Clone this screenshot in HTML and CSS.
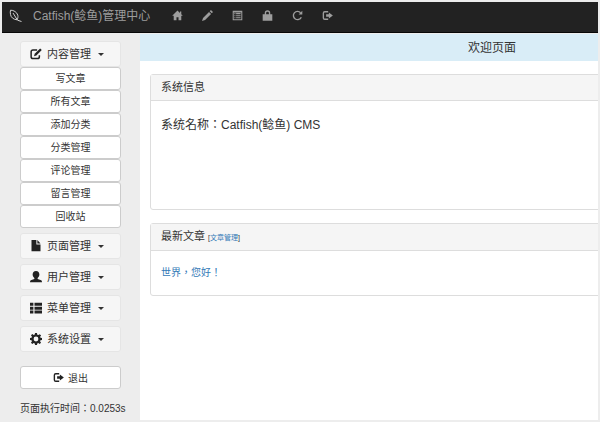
FILE: index.html
```html
<!DOCTYPE html>
<html lang="zh-CN">

<head>
  <meta charset="UTF-8">
  <meta name="viewport" content="width=device-width, initial-scale=1.0">
  <title>Catfish(鲶鱼)管理中心</title>
  <link rel="stylesheet" href="styles.css">
</head>

<body>

  <header class="navbar">
    <a class="brand" href="#">
      <svg class="logo" viewBox="0 0 14 14" aria-hidden="true">
        <path d="M1.500 1.200C4.500 1 8 3.200 8.800 6.200C9.200 8 8.800 9.800 8 10.800C4.500 10.500 2 8.500 1.500 5.500C1.200 4 1.200 2.500 1.500 1.200ZM4 4L8.500 11.200L12.500 12.500"/>
      </svg>
      <span>Catfish(鲶鱼)管理中心</span>
    </a>
    <nav class="tools">
      <a href="#" aria-label="首页"><svg viewBox="0 0 16 16"><path d="M8 .8L.3 8.500H2.500V15H6.500V10.500H9.500V15H13.500V8.500H15.700L13.500 6.300V2H11.500V4.300Z"/></svg></a>
      <a href="#" aria-label="写文章"><svg viewBox="0 0 16 16"><path d="M13 0L16 3L14.200 4.800L11.200 1.800ZM10.200 2.800L13.200 5.800L4.500 14.500L0 16L1.500 11.500Z"/></svg></a>
      <a href="#" aria-label="文章列表"><svg viewBox="0 0 16 16"><path fill-rule="evenodd" d="M1 1H15V15H1ZM2.500 3.500V13.500H13.500V3.500ZM3.500 4.500H5V6H3.500ZM6 4.500H12.500V6H6ZM3.500 7.500H5V9H3.500ZM6 7.500H12.500V9H6ZM3.500 10.500H5V12H3.500ZM6 10.500H12.500V12H6Z"/></svg></a>
      <a href="#" aria-label="修改密码"><svg viewBox="0 0 16 16"><path fill-rule="evenodd" d="M4 6V4.500A4 4 0 0 1 12 4.500V6H15V15.500H1V6ZM6 6H10V4.500A2 2 0 0 0 6 4.500Z"/></svg></a>
      <a href="#" aria-label="刷新"><svg viewBox="0 0 16 16"><path class="stroke" d="M12.500 4A6 6 0 1 0 13.500 10.500"/><path d="M15 1V6.500H9.500Z"/></svg></a>
      <a href="#" aria-label="退出"><svg viewBox="0 0 16 16"><path class="stroke" d="M9 2.500H4Q2 2.500 2 4.500V11.500Q2 13.500 4 13.500H9"/><path d="M10 3.500L15.800 8L10 12.500V9.800H6V6.200H10Z"/></svg></a>
    </nav>
  </header>

  <div class="layout">
    <aside class="sidebar">
      <div class="group">
        <button class="group-title" type="button" aria-expanded="true">
          <svg viewBox="0 0 16 16"><path class="stroke" d="M9.500 2.500H4Q1.500 2.500 1.500 5V11.500Q1.500 14 4 14H10Q12.500 14 12.500 11.500V9.500"/><path d="M13.500.5L15.700 2.700L8.500 9.900L5.300 11L6.300 7.700Z"/></svg>
          <span>内容管理</span>
          <i class="caret"></i>
        </button>
        <ul class="submenu">
          <li><a href="#">写文章</a></li>
          <li><a href="#">所有文章</a></li>
          <li><a href="#">添加分类</a></li>
          <li><a href="#">分类管理</a></li>
          <li><a href="#">评论管理</a></li>
          <li><a href="#">留言管理</a></li>
          <li><a href="#">回收站</a></li>
        </ul>
      </div>
      <div class="group">
        <button class="group-title" type="button" aria-expanded="false">
          <svg viewBox="0 0 16 16"><path d="M2 0H8.500V6H14V15H2ZM9.800 0L14 4.700H9.800Z"/></svg>
          <span>页面管理</span>
          <i class="caret"></i>
        </button>
      </div>
      <div class="group">
        <button class="group-title" type="button" aria-expanded="false">
          <svg viewBox="0 0 16 16"><path d="M8 0C11 0 12.500 2.200 12.500 4.800C12.500 6.800 11.500 8.500 10.200 9.300V10.500L15 12.300Q16 12.800 16 15H0Q0 12.800 1 12.300L5.800 10.500V9.300C4.500 8.500 3.500 6.800 3.500 4.800C3.500 2.200 5 0 8 0Z"/></svg>
          <span>用户管理</span>
          <i class="caret"></i>
        </button>
      </div>
      <div class="group">
        <button class="group-title" type="button" aria-expanded="false">
          <svg viewBox="0 0 16 16"><path d="M0 1H4.500V5H0ZM6 1H16V5H6ZM0 6.200H4.500V10.200H0ZM6 6.200H16V10.200H6ZM0 11.400H4.500V15.400H0ZM6 11.400H16V15.400H6Z"/></svg>
          <span>菜单管理</span>
          <i class="caret"></i>
        </button>
      </div>
      <div class="group">
        <button class="group-title" type="button" aria-expanded="false">
          <svg viewBox="0 0 16 16"><path fill-rule="evenodd" d="M6.700 0H9.300L9.700 2.200L11.200 2.800L13 1.500L14.800 3.300L13.500 5.100L14 6.400L16 6.700V9.300L14 9.700L13.400 11.100L14.700 12.900L12.900 14.700L11.100 13.400L9.700 14L9.300 16H6.700L6.300 14L4.900 13.400L3.100 14.700L1.300 12.900L2.600 11.100L2 9.700L0 9.300V6.700L2 6.300L2.600 4.900L1.300 3.100L3.100 1.300L4.900 2.600L6.300 2ZM8 4.800A3.200 3.200 0 1 0 8 11.200A3.200 3.200 0 1 0 8 4.800Z"/></svg>
          <span>系统设置</span>
          <i class="caret"></i>
        </button>
      </div>
      <button class="logout" type="button">
        <svg viewBox="0 0 16 16"><path class="stroke" d="M9 2.500H4Q2 2.500 2 4.500V11.500Q2 13.500 4 13.500H9"/><path d="M10 3.500L15.800 8L10 12.500V9.800H6V6.200H10Z"/></svg>
        <span>退出</span>
      </button>
      <p class="runtime">页面执行时间：0.0253s</p>
    </aside>

    <main class="main">
      <div class="content">
        <h1 class="banner">欢迎页面</h1>
        <section class="panel panel-info">
          <h2 class="panel-heading">系统信息</h2>
          <div class="panel-body">
            <p class="site-name">系统名称：Catfish(鲶鱼) CMS</p>
          </div>
        </section>
        <section class="panel">
          <h2 class="panel-heading">最新文章 <small>[<a href="#">文章管理</a>]</small></h2>
          <div class="panel-body">
            <a class="post" href="#">世界，您好！</a>
          </div>
        </section>
      </div>
    </main>
  </div>

</body>

</html>
```

FILE: styles.css
```css
* {
  margin: 0;
  padding: 0;
  box-sizing: border-box;
}

body {
  display: flex;
  flex-direction: column;
  min-height: 100vh;
  padding: 2px;
  background-color: #ededed;
  color: #333;
  font-family: "Liberation Sans", "Noto Sans CJK SC", sans-serif;
  font-size: 10px;
}

a {
  color: #337ab7;
  text-decoration: none;
}

ul {
  list-style: none;
}

button {
  font-family: inherit;
  color: inherit;
  cursor: pointer;
}

svg {
  display: block;
  flex: none;
  width: 12px;
  height: 12px;
  fill: currentColor;
}

.stroke {
  fill: none;
  stroke: currentColor;
  stroke-width: 2;
}

/* 顶部导航 */
.navbar {
  display: flex;
  align-items: center;
  height: 31px;
  padding-left: 7px;
  padding-bottom: 3px;
  background-color: #222;
  border-bottom: 1px solid #080808;
}

.brand {
  display: flex;
  align-items: center;
  gap: 10px;
  color: #9d9d9d;
  font-size: 12px;
  line-height: 18px;
}

.logo {
  width: 14px;
  height: 14px;
  fill: none;
  stroke: #d0d0d0;
}

.tools {
  display: flex;
  margin-left: 12px;
}

.tools a {
  display: flex;
  justify-content: center;
  width: 30px;
  color: #9d9d9d;
}

.tools svg {
  width: 11px;
  height: 11px;
}

/* 左侧菜单 */
.layout {
  display: flex;
  flex: 1;
  padding-top: 1px;
}

.sidebar {
  flex: none;
  width: 138px;
  padding: 7px 19px 0 18px;
}

.group {
  margin-bottom: 5px;
}

.group-title {
  display: flex;
  align-items: center;
  width: 100%;
  height: 26px;
  padding: 0 9px;
  border: 1px solid #e5e5e5;
  border-radius: 3px;
  background-color: #f6f6f6;
  font-size: 11px;
  line-height: 16px;
}

.group-title span {
  margin-left: 5px;
}

.group-title svg,
.logout svg {
  color: #222;
}

.caret {
  margin-left: 7px;
  border-top: 3px solid #333;
  border-left: 3px solid transparent;
  border-right: 3px solid transparent;
}

.submenu a {
  display: block;
  height: 23px;
  border: 1px solid #ccc;
  border-radius: 3px;
  background-color: #fff;
  color: #333;
  line-height: 21px;
  text-align: center;
}

.logout {
  display: flex;
  align-items: center;
  justify-content: center;
  gap: 4px;
  width: 100%;
  height: 23px;
  margin-top: 14px;
  border: 1px solid #ccc;
  border-radius: 3px;
  background-color: #fff;
  font-size: 10px;
}

.logout svg {
  width: 11px;
  height: 11px;
}

.runtime {
  margin-top: 12px;
  line-height: 16px;
  white-space: nowrap;
}

/* 逗号、冒号居中显示 */
.runtime,
.site-name,
.post {
  font-family: "Liberation Sans", "Noto Sans CJK TC", sans-serif;
  font-feature-settings: "locl" 0;
}

/* 右侧内容 */
.main {
  flex: 1;
  min-width: 0;
  overflow: hidden;
  background-color: #fff;
}

.content {
  min-width: 704px;
}

.banner {
  padding-top: 1px;
  background-color: #d9edf7;
  font-size: 12px;
  font-weight: normal;
  line-height: 26px;
  text-align: center;
}

.panel {
  margin: 13px 10px;
  border: 1px solid #ddd;
  border-radius: 3px;
}

.panel-info {
  min-height: 136px;
}

.panel-heading {
  padding: 0 10px;
  border-bottom: 1px solid #ddd;
  background-color: #f5f5f5;
  font-size: 11px;
  font-weight: normal;
  line-height: 25px;
}

.panel-heading small {
  font-size: 7px;
}

.panel-body {
  padding: 13px 10px;
  line-height: 18px;
}

.site-name {
  margin-top: 2px;
  font-size: 12px;
}
```
